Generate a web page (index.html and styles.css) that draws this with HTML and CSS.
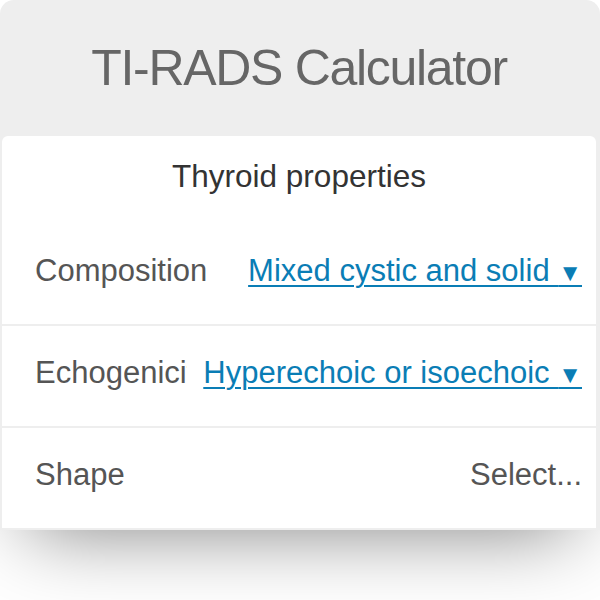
FILE: index.html
```html
<!DOCTYPE html>
<html lang="en">
<head>
<meta charset="utf-8">
<title>TI-RADS Calculator</title>
<link rel="stylesheet" href="styles.css">
</head>
<body>
<div class="calc">
  <header class="calc-header">
    <h1 class="calc-title">TI-RADS Calculator</h1>
  </header>
  <div class="panel">
    <div class="section-title">Thyroid properties</div>
    <div class="row">
      <span class="label">Composition</span>
      <a class="value link" href="#">Mixed cystic and solid <span class="caret">▼</span></a>
    </div>
    <div class="row">
      <span class="label">Echogenicity</span>
      <a class="value link" href="#">Hyperechoic or isoechoic <span class="caret">▼</span></a>
    </div>
    <div class="row">
      <span class="label">Shape</span>
      <span class="value placeholder">Select...</span>
    </div>
  </div>
</div>
<div class="fold"></div>
</body>
</html>
```

FILE: styles.css
```css
html, body {
  margin: 0;
  padding: 0;
  background: #ffffff;
}

body {
  font-family: "Liberation Sans", Arial, Helvetica, sans-serif;
  width: 600px;
}

.calc {
  background: #eeeeee;
  border-radius: 14px 14px 0 0;
  padding: 0 4px 0 2px;
}

.calc-header {
  height: 136px;
  display: flex;
  align-items: center;
  justify-content: center;
}

.calc-title {
  margin: 0;
  font-size: 50px;
  font-weight: normal;
  letter-spacing: -1.3px;
  color: #666666;
  line-height: 1;
}

.panel {
  background: #ffffff;
  border-radius: 6px 6px 0 0;
}

.section-title {
  box-sizing: border-box;
  height: 88px;
  padding-bottom: 8px;
  display: flex;
  align-items: center;
  justify-content: center;
  font-size: 31.5px;
  color: #333333;
}

.row {
  box-sizing: border-box;
  height: 102px;
  padding: 0 14px 7px 33px;
  border-bottom: 2px solid #eeeeee;
  display: flex;
  align-items: center;
  font-size: 31px;
}

.label {
  flex: 1 1 auto;
  min-width: 0;
  overflow: hidden;
  white-space: nowrap;
  color: #555555;
}

.value {
  flex: 0 0 auto;
  margin-left: 16px;
  white-space: nowrap;
}

.link {
  color: #0a7db5;
  text-decoration: underline;
  text-decoration-thickness: 2px;
  text-underline-offset: 4px;
}

.caret {
  font-size: 24px;
}

.placeholder {
  color: #555555;
}

.fold {
  height: 70px;
  position: relative;
  overflow: hidden;
}

.fold::before {
  content: "";
  position: absolute;
  left: 28px;
  right: 28px;
  top: -100px;
  height: 100px;
  box-shadow: 0 0 80px rgba(0, 0, 0, 0.5);
}
```
